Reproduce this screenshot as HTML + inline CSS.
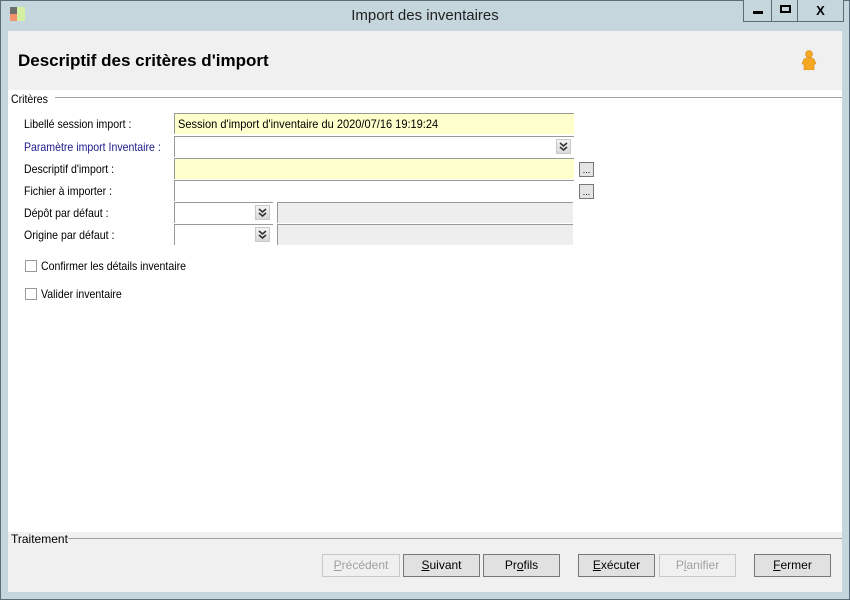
<!DOCTYPE html>
<html><head><meta charset="utf-8"><style>
*{box-sizing:border-box;margin:0;padding:0}
body{width:850px;height:600px;background:#c5d6dd;position:relative;overflow:hidden;font-family:"Liberation Sans",sans-serif;font-size:12px;color:#000}
.frame{position:absolute;left:0;top:0;width:850px;height:600px;border:1px solid #5a6d78}
.title{position:absolute;left:0;top:7px;width:850px;text-align:center;font-size:15px;color:#222}
.ctl{position:absolute;top:0;height:22px;border:1px solid #5a6d78;border-top:none;background:#c5d6dd}
.client{position:absolute;left:8px;top:31px;width:834px;height:561px;background:#fff}
.hdr{position:absolute;left:0;top:0;width:834px;height:59px;background:#f0f0f0}
.hdr h1{position:absolute;left:10px;top:20px;font-size:17px;font-weight:bold}
.lbl{position:absolute;left:16px;font-size:12px;white-space:nowrap;transform:scaleX(0.88);transform-origin:0 0}
.fld{position:absolute;left:166px;height:21px;border-top:1px solid #999;border-left:1px solid #999;background:#fff}
.yel{background:#ffffcc}
.gry{background:#eeeeee}
.dd{position:absolute;width:15px;height:15px;top:2px;background:linear-gradient(#f4f4f4,#d8d8d8);border:1px solid #c8c8c8}
.dd svg{position:absolute;left:2px;top:2px}
.dots{position:absolute;left:571px;width:15px;height:15px;border:1px solid #777;background:#e4e4e4;font-size:9px;line-height:15px;text-align:center}
.cb{position:absolute;left:17px;width:12px;height:12px;border:1px solid #999;background:#fff}
.btn{position:absolute;top:523px;height:23px;border:1px solid #777;background:#e1e1e1;text-align:center;line-height:21px;font-size:12px}
.dis{border-color:#c8c8c8;color:#a0a0a0;background:#f0f0f0}
</style></head><body>
<div class="frame"></div>
<div style="position:absolute;left:10px;top:7px;width:7px;height:7px;background:#6e6e6e"></div>
<div style="position:absolute;left:10px;top:14px;width:7px;height:7px;background:#f4946a"></div>
<div style="position:absolute;left:17px;top:7px;width:8px;height:14px;background:#d4f0a0"></div>
<div class="title">Import des inventaires</div>
<div class="ctl" style="left:743px;width:29px"><div style="position:absolute;left:9px;top:11px;width:10px;height:3px;background:#000"></div></div>
<div class="ctl" style="left:771px;width:27px"><div style="position:absolute;left:8px;top:5px;width:11px;height:8px;border:2px solid #000"></div></div>
<div class="ctl" style="left:797px;width:47px;text-align:center;font-weight:bold;font-size:13px;line-height:21px">X</div>
<div class="client">
<div class="hdr"><h1>Descriptif des critères d'import</h1>
<svg style="position:absolute;left:793px;top:19px" width="16" height="20" viewBox="0 0 16 20"><circle cx="8" cy="4" r="3.5" fill="#f5a623" stroke="#d88a10" stroke-width=".6"/><path d="M3 9 Q8 6 13 9 L15 14 L13 14 L13 20 L3 20 L3 14 L1 14 Z" fill="#f5a623" stroke="#d88a10" stroke-width=".6"/></svg></div>
<div style="position:absolute;left:0;top:61px;background:#fff;padding:0 3px;width:44px"><span class="lbl" style="position:static;display:inline-block;left:0">Critères</span></div>
<div style="position:absolute;left:47px;top:66px;width:787px;height:1px;background:#a0a0a0"></div>

<div class="lbl" style="top:86px">Libellé session import :</div>
<div class="fld yel" style="top:82px;width:400px;padding:3px 3px"><span style="display:inline-block;font-size:12px;transform:scaleX(0.92);transform-origin:0 0;white-space:nowrap">Session d'import d'inventaire du 2020/07/16 19:19:24</span></div>
<div class="lbl" style="top:109px;color:#1a1a8c">Paramètre import Inventaire :</div>
<div class="fld" style="top:105px;width:400px"><div class="dd" style="left:381px"><svg width="9" height="9" viewBox="0 0 9 9"><path d="M1 1L4.5 4L8 1M1 5L4.5 8L8 5" fill="none" stroke="#333" stroke-width="1.6"/></svg></div></div>
<div class="lbl" style="top:131px">Descriptif d'import :</div>
<div class="fld yel" style="top:127px;width:400px"></div><div class="dots" style="top:131px">...</div>
<div class="lbl" style="top:153px">Fichier à importer :</div>
<div class="fld" style="top:149px;width:400px"></div><div class="dots" style="top:153px">...</div>
<div class="lbl" style="top:175px">Dépôt par défaut :</div>
<div class="fld" style="top:171px;width:99px"><div class="dd" style="left:80px"><svg width="9" height="9" viewBox="0 0 9 9"><path d="M1 1L4.5 4L8 1M1 5L4.5 8L8 5" fill="none" stroke="#333" stroke-width="1.6"/></svg></div></div>
<div class="fld gry" style="top:171px;left:269px;width:296px"></div>
<div class="lbl" style="top:197px">Origine par défaut :</div>
<div class="fld" style="top:193px;width:99px"><div class="dd" style="left:80px"><svg width="9" height="9" viewBox="0 0 9 9"><path d="M1 1L4.5 4L8 1M1 5L4.5 8L8 5" fill="none" stroke="#333" stroke-width="1.6"/></svg></div></div>
<div class="fld gry" style="top:193px;left:269px;width:296px"></div>

<div class="cb" style="top:229px"></div><div class="lbl" style="left:33px;top:228px">Confirmer les détails inventaire</div>
<div class="cb" style="top:257px"></div><div class="lbl" style="left:33px;top:256px">Valider inventaire</div>

<div style="position:absolute;left:0;top:501px;width:834px;height:60px;background:#f0f0f0"></div>
<div style="position:absolute;left:60px;top:507px;width:774px;height:1px;background:#a0a0a0"></div>
<div style="position:absolute;left:3px;top:501px;font-size:12px">Traitement</div>
<div class="btn dis" style="left:314px;width:78px"><u>P</u>récédent</div>
<div class="btn" style="left:395px;width:77px"><u>S</u>uivant</div>
<div class="btn" style="left:475px;width:77px">Pr<u>o</u>fils</div>
<div class="btn" style="left:570px;width:77px"><u>E</u>xécuter</div>
<div class="btn dis" style="left:651px;width:77px">P<u>l</u>anifier</div>
<div class="btn" style="left:746px;width:77px"><u>F</u>ermer</div>
</div>
</body></html>
